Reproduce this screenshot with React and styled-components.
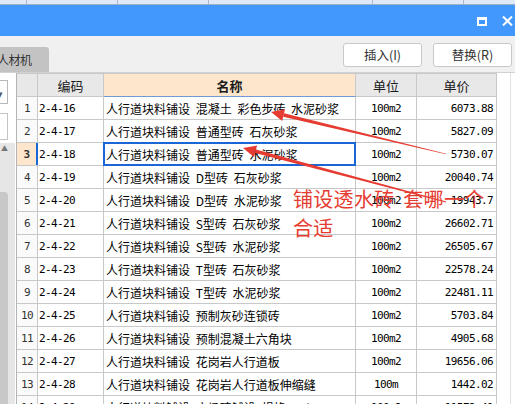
import React from 'react'
import styled, { createGlobalStyle } from 'styled-components'

const GlobalStyle = createGlobalStyle`
  html, body { margin: 0; padding: 0; background: #f0f0f0; overflow: hidden; }
  * { box-sizing: border-box; }
`

const rows = [
  ['1', '2-4-16', '人行道块料铺设 混凝土 彩色步砖 水泥砂浆', '100m2', '6073.88'],
  ['2', '2-4-17', '人行道块料铺设 普通型砖 石灰砂浆', '100m2', '5827.09'],
  ['3', '2-4-18', '人行道块料铺设 普通型砖 水泥砂浆', '100m2', '5730.07'],
  ['4', '2-4-19', '人行道块料铺设 D型砖 石灰砂浆', '100m2', '20040.74'],
  ['5', '2-4-20', '人行道块料铺设 D型砖 水泥砂浆', '100m2', '19943.7'],
  ['6', '2-4-21', '人行道块料铺设 S型砖 石灰砂浆', '100m2', '26602.71'],
  ['7', '2-4-22', '人行道块料铺设 S型砖 水泥砂浆', '100m2', '26505.67'],
  ['8', '2-4-23', '人行道块料铺设 T型砖 石灰砂浆', '100m2', '22578.24'],
  ['9', '2-4-24', '人行道块料铺设 T型砖 水泥砂浆', '100m2', '22481.11'],
  ['10', '2-4-25', '人行道块料铺设 预制灰砂连锁砖', '100m2', '5703.84'],
  ['11', '2-4-26', '人行道块料铺设 预制混凝土六角块', '100m2', '4905.68'],
  ['12', '2-4-27', '人行道块料铺设 花岗岩人行道板', '100m2', '19656.06'],
  ['13', '2-4-28', '人行道块料铺设 花岗岩人行道板伸缩缝', '100m', '1442.02'],
  ['14', '2-4-29', '人行道块料铺设 广场砖铺设 规格100*100', '100m2', '11572.41'],
]

const stripCells = [27, 91, 91, 164, 91, 51]

// tapered brush arrow, tip <- tail
function arrowShape(tip, tail, headLen, headHalf, thick, thin) {
  const dx = tip[0] - tail[0]
  const dy = tip[1] - tail[1]
  const len = Math.hypot(dx, dy)
  const ux = dx / len, uy = dy / len
  const nx = -uy, ny = ux
  const bx = tip[0] - ux * headLen, by = tip[1] - uy * headLen
  const p = (x, y) => `${x.toFixed(1)},${y.toFixed(1)}`
  const shaft = [
    p(bx + nx * thick, by + ny * thick),
    p(tail[0] + nx * thin, tail[1] + ny * thin),
    p(tail[0] - nx * thin, tail[1] - ny * thin),
    p(bx - nx * thick, by - ny * thick),
  ].join(' ')
  const head = [
    p(tip[0], tip[1]),
    p(bx + nx * headHalf, by + ny * headHalf),
    p(bx - nx * headHalf, by - ny * headHalf),
  ].join(' ')
  return { shaft, head }
}

const arrows = [
  arrowShape([271, 112], [446, 154], 13, 6, 1.8, 0.3),
  arrowShape([243, 148], [446, 202], 13, 6, 1.8, 0.4),
]

function App() {
  return (
    <Page>
      <GlobalStyle />
      <TopStrip>
        {stripCells.map((w, i) => <StripCell key={i} style={{ width: w }} />)}
      </TopStrip>
      <TitleBar>
        <svg width="10" height="9" viewBox="0 0 10 9">
          <rect x="1" y="1.5" width="8" height="6.5" fill="none" stroke="#fff" strokeWidth="2" />
          <rect x="0" y="0" width="10" height="3" fill="#fff" />
        </svg>
        <svg width="11" height="10" viewBox="0 0 11 10">
          <path d="M1 0.5 L10 9.5 M10 0.5 L1 9.5" stroke="#fff" strokeWidth="2" />
        </svg>
      </TitleBar>
      <Toolbar>
        <Tab>人材机</Tab>
        <ButtonGroup>
          <ToolButton>插入(I)</ToolButton>
          <ToolButton>替换(R)</ToolButton>
        </ButtonGroup>
      </Toolbar>
      <Body>
        <LeftPanel>
          <SelectBox><Caret>▾</Caret></SelectBox>
          <InputBox />
          <Track>
            <TrackArrow>▲</TrackArrow>
            <Thumb />
          </Track>
        </LeftPanel>
        <Grid>
          <HeadRow>
            <HeadCell />
            <HeadCell>编码</HeadCell>
            <HeadCell $active>名称</HeadCell>
            <HeadCell>单位</HeadCell>
            <HeadCell>单价</HeadCell>
          </HeadRow>
          {rows.map(([no, code, name, unit, price]) => {
            const sel = no === '3'
            return (
              <Row key={no}>
                <NoCell $selected={sel}>{no}</NoCell>
                <CodeCell>{code}</CodeCell>
                <NameCell $selected={sel}>{name}</NameCell>
                <UnitCell>{unit}</UnitCell>
                <PriceCell>{price}</PriceCell>
              </Row>
            )
          })}
        </Grid>
        <RightFill />
      </Body>

      <Overlay width="515" height="404" viewBox="0 0 515 404">
        {arrows.map((a, i) => (
          <g key={i} fill="#e63b30">
            <polygon points={a.shaft} />
            <polygon points={a.head} />
          </g>
        ))}
      </Overlay>
      <Note>
        铺设透水砖 套哪一个<br />合适
      </Note>
    </Page>
  )
}

export default App

const Page = styled.div`
  position: relative;
  width: 515px;
  height: 404px;
  overflow: hidden;
  background: #f0f0f0;
  font-family: "Noto Sans CJK SC", "Noto Sans", sans-serif;
`
const TopStrip = styled.div`
  display: flex;
  height: 5px;
  background: #dfe9f8;
  border-bottom: 1px solid #9fb0c6;
`
const StripCell = styled.div`
  height: 100%;
  border-right: 1px solid #a9b9cf;
  &:last-child { border-right: none; }
`
const TitleBar = styled.div`
  height: 31px;
  background: #4298fd;
  display: flex;
  justify-content: flex-end;
  align-items: center;
  gap: 15px;
  padding-right: 2px;
  padding-top: 1px;
`
const Toolbar = styled.div`
  height: 37px;
  display: flex;
  justify-content: space-between;
  border-bottom: 1px solid #d2d2d2;
`
const Tab = styled.div`
  align-self: flex-end;
  margin-left: -10px;
  height: 25px;
  padding: 0 17px 0 7px;
  background: #c3c3c3;
  border-top-right-radius: 3px;
  color: #333;
  font-size: 12px;
  line-height: 25px;
  letter-spacing: -0.5px;
`
const ButtonGroup = styled.div`
  display: flex;
  gap: 11px;
  padding: 7px 3px 0 0;
`
const ToolButton = styled.button`
  width: 79px;
  height: 24px;
  background: #fff;
  border: 1px solid #c9c9c9;
  border-radius: 3px;
  font-family: "Noto Sans CJK SC", "Noto Sans", sans-serif;
  font-size: 12.5px;
  color: #333;
  padding: 0;
  line-height: 22px;
`
const Body = styled.div`
  display: flex;
  height: 331px;
  background: #fff;
`
const LeftPanel = styled.div`
  width: 16px;
  flex: none;
  display: flex;
  flex-direction: column;
  background: #fff;
  padding-top: 7px;
`
const SelectBox = styled.div`
  width: 8px;
  height: 24px;
  border: 1px solid #b8b8b8;
  border-left: none;
  position: relative;
  overflow: hidden;
`
const Caret = styled.span`
  position: absolute;
  left: -3px;
  top: 4px;
  font-size: 11px;
  color: #555;
`
const InputBox = styled.div`
  width: 8px;
  height: 27px;
  margin-top: 9px;
  border: 1px solid #c4c4c4;
  border-left: none;
`
const Track = styled.div`
  margin-top: 3px;
  width: 15px;
  flex: 1;
  background: #e6e6e6;
  display: flex;
  flex-direction: column;
`
const TrackArrow = styled.div`
  font-size: 7px;
  line-height: 8px;
  height: 8px;
  color: #777;
  padding-left: 1px;
  margin-top: 1px;
`
const Thumb = styled.div`
  margin-top: 40px;
  width: 8px;
  flex: 1;
  background: #c8c8c8;
  border-top-right-radius: 4px;
`
const Grid = styled.div`
  flex: none;
  border-left: 1px solid #b4b4b4;
  border-right: 1px solid #c8c8c8;
`
const HeadRow = styled.div`
  display: grid;
  grid-template-columns: 21px 66px 252px 61px 79px;
  height: 24px;
  border-top: 1px solid #c8c8c8;
  border-bottom: 1px solid #c8c8c8;
`
const HeadCell = styled.div`
  display: flex;
  align-items: center;
  justify-content: center;
  border-right: 1px solid #c8c8c8;
  background: ${p => (p.$active ? '#fde6cc' : '#e8e8e8')};
  ${p => p.$active && 'border-bottom: 1px solid #6f9ad2; margin-bottom: -1px; font-weight: bold;'}
  font-size: 13px;
  color: #1a1a1a;
  &:last-child { border-right: none; }
`
const Row = styled.div`
  display: grid;
  grid-template-columns: 21px 66px 252px 61px 79px;
  height: 23px;
  border-bottom: 1px solid #c8c8c8;
`
const Cell = styled.div`
  display: flex;
  align-items: center;
  border-right: 1px solid #c8c8c8;
  white-space: nowrap;
  overflow: hidden;
  color: #000;
  &:last-child { border-right: none; }
`
const NoCell = styled(Cell)`
  justify-content: center;
  background: ${p => (p.$selected ? '#fde6cc' : '#fafafa')};
  ${p => p.$selected && 'border-right: 2px solid #1a66d6; font-weight: bold;'}
  font-family: "DejaVu Sans Mono", monospace;
  font-size: 11px;
  letter-spacing: -0.6px;
  color: #333;
  padding-top: 1px;
`
const CodeCell = styled(Cell)`
  padding-left: 1px;
  font-family: "DejaVu Sans Mono", monospace;
  font-size: 11px;
  letter-spacing: -0.6px;
`
const NameCell = styled(Cell)`
  padding-left: 2px;
  font-size: 12px;
  word-spacing: 3px;
  position: relative;
  overflow: visible;
  ${p => p.$selected && `
    &::after {
      content: '';
      position: absolute;
      left: -1px;
      top: -1px;
      right: -1px;
      bottom: -1px;
      border: 2px solid #1a66d6;
    }
  `}
`
const UnitCell = styled(Cell)`
  justify-content: center;
  font-family: "DejaVu Sans Mono", monospace;
  font-size: 11px;
  letter-spacing: -0.6px;
`
const PriceCell = styled(Cell)`
  justify-content: flex-end;
  padding-right: 3px;
  font-family: "DejaVu Sans Mono", monospace;
  font-size: 11px;
  letter-spacing: -0.6px;
`
const RightFill = styled.div`
  flex: 1;
  background: #fff;
  border-right: 4px solid #fff;
  box-shadow: inset -1px 0 0 #e2e2e2;
`
const Overlay = styled.svg`
  position: absolute;
  left: 0;
  top: 0;
  pointer-events: none;
`
const Note = styled.div`
  position: absolute;
  left: 293px;
  top: 184px;
  font-size: 20px;
  line-height: 29px;
  color: #e63b30;
  white-space: nowrap;
  letter-spacing: 0.3px;
  word-spacing: 4px;
`
